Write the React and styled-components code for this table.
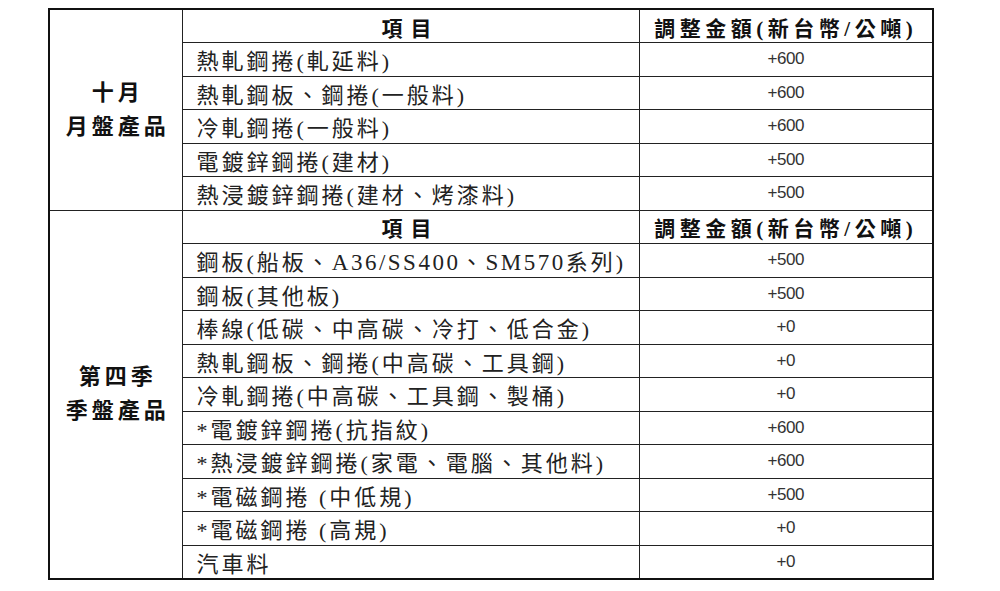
import styled, { createGlobalStyle } from "styled-components";

const GlobalStyle = createGlobalStyle`
  html, body {
    margin: 0;
    padding: 0;
    background: #ffffff;
  }
`;

const Page = styled.div`
  padding: 8px 0 0 48px;
`;

const Table = styled.table`
  border-collapse: collapse;
  table-layout: fixed;
  width: 884px;
  border: 2px solid #111;
  font-family: "Liberation Serif", "Noto Sans CJK TC", serif;
  color: #222;
`;

const Row = styled.tr`
  height: 33.5px;
`;

const Cell = styled.td`
  border: 1px solid #222;
  padding: 0;
  vertical-align: middle;
`;

const GroupCell = styled(Cell)`
  text-align: center;
  font-weight: 700;
  font-size: 22px;
  line-height: 34px;
  letter-spacing: 4px;
  padding-left: 4px;
  color: #111;
`;

const HeadCell = styled(Cell)`
  text-align: center;
  font-weight: 700;
  font-size: 21px;
  letter-spacing: ${(p) => (p.$wide ? "8px" : "4.5px")};
  color: #111;
  padding-top: 1px;
`;

const ItemCell = styled(Cell)`
  padding-left: 14px;
  font-size: 22px;
  letter-spacing: 3px;
  white-space: nowrap;
`;

const Latin = styled.span`
  letter-spacing: 2.5px;
  font-size: 23px;
`;

const AmountCell = styled(Cell)`
  text-align: center;
  font-family: "Liberation Sans", "DejaVu Sans", sans-serif;
  font-size: 17px;
  letter-spacing: -0.5px;
  color: #333;
`;

const monthly = [
  ["熱軋鋼捲(軋延料)", "+600"],
  ["熱軋鋼板、鋼捲(一般料)", "+600"],
  ["冷軋鋼捲(一般料)", "+600"],
  ["電鍍鋅鋼捲(建材)", "+500"],
  ["熱浸鍍鋅鋼捲(建材、烤漆料)", "+500"],
];

const quarterly = [
  ["鋼板(船板、A36/SS400、SM570系列)", "+500"],
  ["鋼板(其他板)", "+500"],
  ["棒線(低碳、中高碳、冷打、低合金)", "+0"],
  ["熱軋鋼板、鋼捲(中高碳、工具鋼)", "+0"],
  ["冷軋鋼捲(中高碳、工具鋼、製桶)", "+0"],
  ["*電鍍鋅鋼捲(抗指紋)", "+600"],
  ["*熱浸鍍鋅鋼捲(家電、電腦、其他料)", "+600"],
  ["*電磁鋼捲 (中低規)", "+500"],
  ["*電磁鋼捲 (高規)", "+0"],
  ["汽車料", "+0"],
];

// latin runs get their own size and spacing
function ItemText({ text }) {
  return text
    .split(/([A-Za-z0-9/]+)/)
    .map((part, i) => (i % 2 ? <Latin key={i}>{part}</Latin> : part));
}

function Section({ lines, items }) {
  return (
    <>
      <Row>
        <GroupCell rowSpan={items.length + 1}>
          {lines.map((l) => (
            <div key={l}>{l}</div>
          ))}
        </GroupCell>
        <HeadCell $wide>項目</HeadCell>
        <HeadCell>調整金額(新台幣/公噸)</HeadCell>
      </Row>
      {items.map(([name, amount]) => (
        <Row key={name}>
          <ItemCell>
            <ItemText text={name} />
          </ItemCell>
          <AmountCell>{amount}</AmountCell>
        </Row>
      ))}
    </>
  );
}

export default function App() {
  return (
    <>
      <GlobalStyle />
      <Page>
        <Table>
          <colgroup>
            <col style={{ width: 133 }} />
            <col style={{ width: 457 }} />
            <col style={{ width: 294 }} />
          </colgroup>
          <tbody>
            <Section lines={["十月", "月盤產品"]} items={monthly} />
            <Section lines={["第四季", "季盤產品"]} items={quarterly} />
          </tbody>
        </Table>
      </Page>
    </>
  );
}
